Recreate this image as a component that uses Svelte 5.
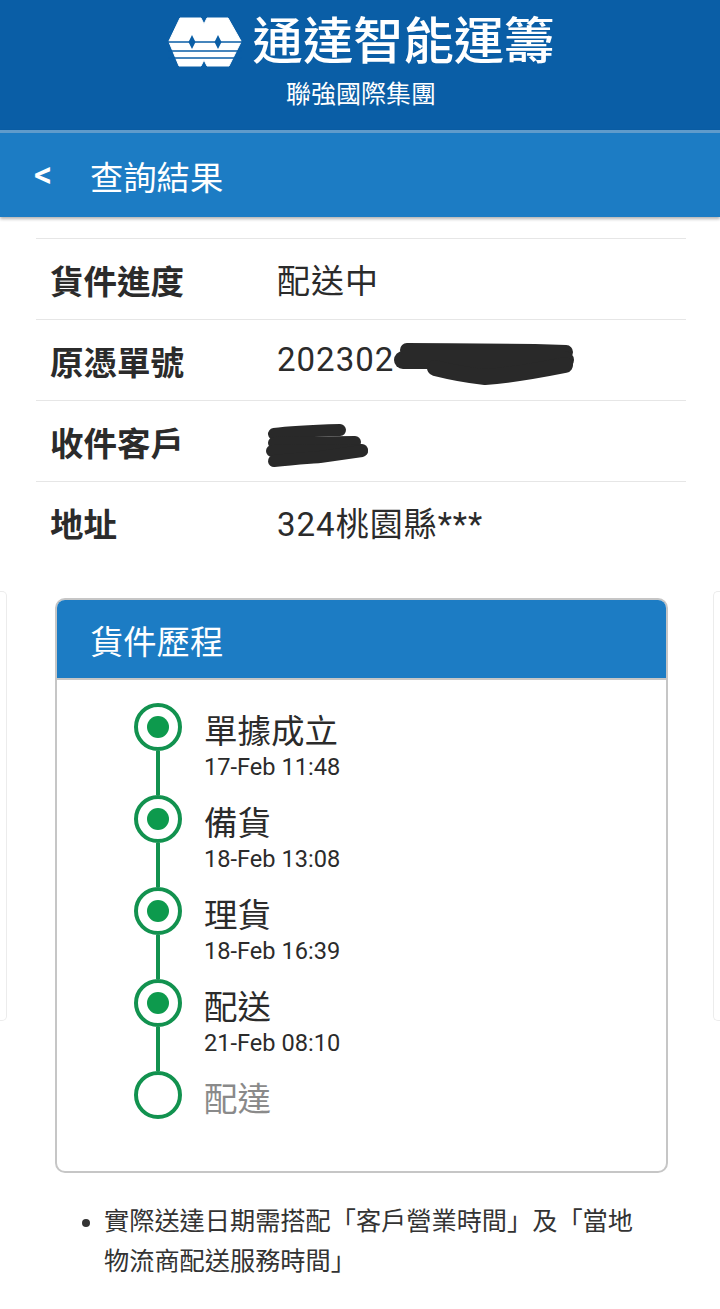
<script>
  const rows = [
    { label: '貨件進度', value: '配送中' },
    { label: '原憑單號', value: '202302', mask: 'a' },
    { label: '收件客戶', value: '', mask: 'b' },
    { label: '地址', value: '324桃園縣***' },
  ]

  const steps = [
    { name: '單據成立', time: '17-Feb 11:48', done: true },
    { name: '備貨', time: '18-Feb 13:08', done: true },
    { name: '理貨', time: '18-Feb 16:39', done: true },
    { name: '配送', time: '21-Feb 08:10', done: true },
    { name: '配達', time: '', done: false },
  ]
</script>

<div class="page">
  <header class="brand">
    <div class="brand-top">
      <svg class="logo" viewBox="0 0 74 50" width="74" height="50" aria-hidden="true">
        <path d="M12 1 H33 L36 7 L39 1 H60 L73 24 V25 L61 49 H39 L36 43 L33 49 H11 L1 25 V24 Z" fill="#fff" stroke="#fff" stroke-linejoin="round" />
        <path d="M0 25 H74 M0 34 H74 M0 41 H74" stroke="#0a5ea6" stroke-width="1.4" />
        <path d="M24 18 L27.5 25 L24 32 L20.5 25 Z M50 18 L53.5 25 L50 32 L46.5 25 Z" fill="#0a5ea6" />
      </svg>
      <span class="brand-name">通達智能運籌</span>
    </div>
    <div class="brand-sub">聯強國際集團</div>
  </header>

  <nav class="bar">
    <span class="back">&lt;</span>
    <span class="bar-title">查詢結果</span>
  </nav>

  <section class="info">
    {#each rows as r}
      <div class="row">
        <div class="label">{r.label}</div>
        <div class="value">
          {r.value}
          {#if r.mask === 'a'}
            <svg class="mask mask-a" width="190" height="56" viewBox="0 0 190 56" aria-hidden="true">
              <g fill="none" stroke="#292929" stroke-linecap="round" stroke-linejoin="round">
                <path d="M17 15 C60 15 110 16 145 16 L176 17" stroke-width="14" />
                <path d="M13 25 H175" stroke-width="18" />
                <path d="M45 33 C65 38 85 41 95 42 C125 40 150 35 175 30" stroke-width="16" />
              </g>
            </svg>
          {:else if r.mask === 'b'}
            <svg class="mask mask-b" width="110" height="56" viewBox="0 0 110 56" aria-hidden="true">
              <g fill="none" stroke="#292929" stroke-width="12" stroke-linecap="round" stroke-linejoin="round">
                <path d="M11 16 C25 14 40 13 77 12" />
                <path d="M11 25 L92 24" />
                <path d="M9 33 L99 32" />
                <path d="M11 43 C30 41 45 40 57 39 L99 33" />
              </g>
            </svg>
          {/if}
        </div>
      </div>
    {/each}
  </section>

  <div class="carousel">
    <div class="peek peek-left"></div>
    <section class="card">
      <h2 class="card-head">貨件歷程</h2>
      <ol class="steps">
        {#each steps as s, i}
          <li class="step">
            <div class="rail">
              <span class="node">
                {#if s.done}<span class="dot"></span>{/if}
              </span>
              {#if i < steps.length - 1}<span class="line"></span>{/if}
            </div>
            <div class="step-text">
              <div class="step-name" class:pending={!s.done}>{s.name}</div>
              {#if s.time}<div class="step-time">{s.time}</div>{/if}
            </div>
          </li>
        {/each}
      </ol>
    </section>
    <div class="peek peek-right"></div>
  </div>

  <ul class="notes">
    <li>實際送達日期需搭配「客戶營業時間」及「當地物流商配送服務時間」</li>
  </ul>
</div>

<style>
  :global(body) {
    margin: 0;
    background: #fff;
  }

  .page {
    width: 720px;
    height: 1309px;
    overflow: hidden;
    font-family: Roboto, "Noto Sans CJK TC", sans-serif;
    color: #2b2b2b;
    text-spacing-trim: space-all;
  }

  .brand {
    height: 130px;
    box-sizing: border-box;
    padding-top: 16px;
    background: #0a5ea6;
    color: #fff;
    text-align: center;
  }

  .brand-top {
    display: flex;
    justify-content: center;
    align-items: center;
    gap: 11px;
    height: 52px;
    padding-left: 2px;
  }

  .logo { display: block; }

  .brand-name {
    font-size: 50.3px;
    font-weight: 500;
    line-height: 52px;
  }

  .brand-sub {
    margin-top: 14px;
    padding-left: 2px;
    font-size: 25px;
    font-weight: 400;
    line-height: 26px;
  }

  .bar {
    display: flex;
    align-items: center;
    height: 84px;
    border-top: 3px solid #5f9bcb;
    background: #1c7cc4;
    color: #fff;
    box-shadow: 0 2px 3px rgba(0, 0, 0, .3);
    position: relative;
  }

  .back {
    width: 90px;
    box-sizing: border-box;
    padding-left: 34px;
    font-size: 36px;
    font-weight: 500;
  }

  .bar-title {
    font-size: 33.3px;
    line-height: 40px;
    padding-top: 8px;
  }

  .info {
    margin: 21px 34px 0 36px;
  }

  .row {
    display: grid;
    grid-template-columns: 227px 1fr;
    align-items: center;
    height: 81px;
    box-sizing: border-box;
    padding: 0 0 0 14px;
    border-top: 1px solid #e6e6e6;
  }

  .label {
    font-size: 33.5px;
    font-weight: 700;
  }

  .value {
    position: relative;
    font-size: 33px;
    letter-spacing: 1px;
    white-space: nowrap;
    min-height: 40px;
  }

  .mask { position: absolute; }
  .mask-a { left: 113px; top: -5px; }
  .mask-b { left: -14px; top: -3px; }

  .carousel {
    display: flex;
    align-items: flex-start;
    margin-top: 29px;
  }

  .peek {
    flex: none;
    width: 7px;
    height: 430px;
    box-sizing: border-box;
    border: 1px solid #ececec;
  }
  .peek-left { border-left: 0; border-radius: 0 5px 5px 0; }
  .peek-right { border-right: 0; border-radius: 5px 0 0 5px; margin-left: auto; }

  .card {
    flex: none;
    width: 613px;
    height: 575px;
    margin: 7px 0 0 48px;
    box-sizing: border-box;
    border: 2px solid #c6c6c6;
    border-radius: 10px;
    overflow: hidden;
  }

  .card-head {
    margin: 0;
    height: 80px;
    box-sizing: border-box;
    padding: 0 33px;
    display: flex;
    align-items: center;
    background: #1c7cc4;
    border-bottom: 2px solid #c6c6c6;
    color: #fff;
    font-size: 33.3px;
    font-weight: 400;
  }

  .steps {
    list-style: none;
    margin: 0;
    padding: 23px 0 0 77px;
  }

  .step {
    display: flex;
    height: 92px;
  }

  .rail {
    display: flex;
    flex-direction: column;
    align-items: center;
    width: 48px;
    flex: none;
  }

  .node {
    display: flex;
    align-items: center;
    justify-content: center;
    width: 48px;
    height: 48px;
    flex: none;
    box-sizing: border-box;
    border: 4px solid #12924f;
    border-radius: 50%;
  }

  .dot {
    width: 22px;
    height: 22px;
    border-radius: 50%;
    background: #0d9a4d;
  }

  .line {
    width: 4px;
    height: 44px;
    background: #12924f;
  }

  .step-text {
    margin-left: 22px;
    padding-top: 7px;
  }

  .step-name {
    font-size: 33.5px;
    line-height: 44px;
    color: #2b2b2b;
  }
  .step-name.pending { color: #8a8a8a; }

  .step-time {
    font-size: 23.6px;
    line-height: 27px;
    color: #2b2b2b;
  }

  .notes {
    margin: 29px 0 0;
    padding: 0 78px 0 104px;
    font-size: 25.2px;
    line-height: 40px;
    color: #333;
  }
</style>
